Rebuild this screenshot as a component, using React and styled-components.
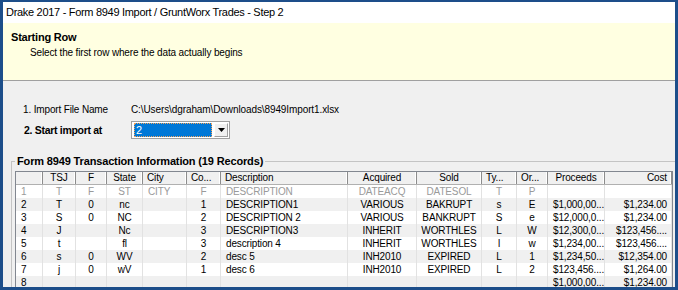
import styled, { createGlobalStyle } from "styled-components";

const GlobalStyle = createGlobalStyle`
  html, body {
    margin: 0;
    padding: 0;
    background: #ffffff;
  }
  body {
    font-family: "Liberation Sans", Arial, sans-serif;
    color: #000;
  }
`;

const COLUMNS = [
  { label: "", width: 27, align: "left" },
  { label: "TSJ", width: 33, align: "center" },
  { label: "F", width: 31, align: "center" },
  { label: "State", width: 36, align: "center" },
  { label: "City", width: 44, align: "left" },
  { label: "Co...", width: 34, align: "center", head: "left" },
  { label: "Description", width: 127, align: "left" },
  { label: "Acquired", width: 69, align: "center" },
  { label: "Sold", width: 65, align: "center" },
  { label: "Ty...", width: 35, align: "center", head: "left" },
  { label: "Or...", width: 31, align: "center", head: "left" },
  { label: "Proceeds", width: 57, align: "left", head: "center" },
  { label: "Cost", width: 67, align: "right" },
];

const ROWS = [
  ["1", "T", "F", "ST", "CITY", "F", "DESCRIPTION", "DATEACQ", "DATESOL", "T", "P", "", ""],
  ["2", "T", "0", "nc", "", "1", "DESCRIPTION1", "VARIOUS", "BAKRUPT", "s", "E", "$1,000,00...", "$1,234.00"],
  ["3", "S", "0", "NC", "", "2", "DESCRIPTION 2", "VARIOUS", "BANKRUPT", "S", "e", "$12,000,0...", "$1,234.00"],
  ["4", "J", "", "Nc", "", "3", "DESCRIPTION3", "INHERIT", "WORTHLES", "L", "W", "$12,300,0...", "$123,456...."],
  ["5", "t", "", "fl", "", "3", "description 4", "INHERIT", "WORTHLES", "l", "w", "$1,234,00...", "$123,456...."],
  ["6", "s", "0", "WV", "", "2", "desc 5", "INH2010", "EXPIRED", "L", "1", "$1,234,50...", "$12,354.00"],
  ["7", "j", "0", "wV", "", "1", "desc 6", "INH2010", "EXPIRED", "L", "2", "$123,456....", "$1,264.00"],
  ["8", "", "", "", "", "", "", "", "", "", "", "$1,000,00...", "$1,234.00"],
];

const TEMPLATE = COLUMNS.map((c) => `${c.width}px`).join(" ");

export default function App() {
  return (
    <>
      <GlobalStyle />
      <Window>
        <TitleBar>Drake 2017 - Form 8949 Import / GruntWorx Trades - Step 2</TitleBar>
        <Banner>
          <BannerTitle>Starting Row</BannerTitle>
          <BannerText>Select the first row where the data actually begins</BannerText>
        </Banner>
        <Content>
          <Fields>
            <FieldLabel>1. Import File Name</FieldLabel>
            <FieldValue>C:\Users\dgraham\Downloads\8949Import1.xlsx</FieldValue>
            <FieldLabel $bold>2. Start import at</FieldLabel>
            <Combo>
              <ComboValue>2</ComboValue>
              <ComboButton>
                <svg width="7" height="4" viewBox="0 0 7 4">
                  <path d="M0 0h7L3.5 4z" fill="#000" />
                </svg>
              </ComboButton>
            </Combo>
          </Fields>
          <Group>
            <Legend>Form 8949 Transaction Information (19 Records)</Legend>
            <ListView>
              <HeaderRow>
                {COLUMNS.map((c, i) => (
                  <HeaderCell key={i} $align={c.head || c.align}>
                    {c.label}
                  </HeaderCell>
                ))}
              </HeaderRow>
              {ROWS.map((row, r) => (
                <DataRow key={r} $shaded={r % 2 === 1} $dim={r === 0}>
                  {row.map((v, i) => (
                    <Cell key={i} $align={COLUMNS[i].align}>
                      {v}
                    </Cell>
                  ))}
                </DataRow>
              ))}
            </ListView>
          </Group>
        </Content>
      </Window>
    </>
  );
}

const Window = styled.div`
  width: 678px;
  height: 290px;
  box-sizing: border-box;
  border: 3px solid #1d4e8a;
  border-top-width: 2px;
  background: #f0f0f0;
  display: flex;
  flex-direction: column;
  overflow: hidden;
`;

const TitleBar = styled.div`
  height: 21px;
  line-height: 21px;
  padding-left: 3px;
  background: #ffffff;
  font-size: 11px;
  letter-spacing: -0.3px;
  white-space: nowrap;
`;

const Banner = styled.div`
  height: 58px;
  box-sizing: border-box;
  padding: 8px 0 0 8px;
  background: #ffffe1;
  border-bottom: 1px solid #a0a0a0;
  flex-shrink: 0;
`;

const BannerTitle = styled.div`
  font-size: 11px;
  font-weight: bold;
  line-height: 13px;
  letter-spacing: -0.2px;
`;

const BannerText = styled.div`
  margin: 2px 0 0 19px;
  font-size: 10px;
  line-height: 13px;
  letter-spacing: -0.15px;
`;

const Content = styled.div`
  flex: 1;
  min-height: 0;
  padding: 0 0 0 8px;
  display: flex;
  flex-direction: column;
  overflow: hidden;
`;

const Fields = styled.div`
  display: grid;
  grid-template-columns: 108px auto;
  grid-auto-rows: 18px;
  row-gap: 3px;
  align-items: center;
  justify-items: start;
  padding: 19px 0 0 12px;
`;

const FieldLabel = styled.div`
  font-size: ${(p) => (p.$bold ? "10.5px" : "10px")};
  font-weight: ${(p) => (p.$bold ? "bold" : "normal")};
  letter-spacing: ${(p) => (p.$bold ? "-0.3px" : "-0.15px")};
  padding-left: ${(p) => (p.$bold ? "1px" : "0")};
`;

const FieldValue = styled.div`
  font-size: 10px;
  letter-spacing: -0.1px;
  white-space: nowrap;
`;

const Combo = styled.div`
  display: flex;
  width: 99px;
  height: 18px;
  box-sizing: border-box;
  border: 1px solid #a0a0a0;
  background: #ffffff;
  padding: 1px 1px 1px 2px;
  gap: 2px;
`;

const ComboValue = styled.div`
  flex: 1;
  background: #0078d7;
  color: #ffffff;
  font-size: 11px;
  line-height: 14px;
  padding-left: 2px;
  outline: 1px dotted #f3a25a;
  outline-offset: -1px;
`;

const ComboButton = styled.div`
  width: 14px;
  box-sizing: border-box;
  background: #f0f0f0;
  border: 1px solid;
  border-color: #ffffff #a0a0a0 #a0a0a0 #ffffff;
  display: flex;
  align-items: center;
  justify-content: center;
`;

const Group = styled.fieldset`
  margin: 16px -40px 0 0;
  padding: 3px 0 0 3px;
  border: 1px solid #c4c4c4;
  min-width: 0;
  flex: 1;
`;

const Legend = styled.legend`
  padding: 0 2px;
  font-size: 11px;
  font-weight: bold;
  line-height: 13px;
  letter-spacing: -0.15px;
`;

const ListView = styled.div`
  width: 656px;
  border: 1px solid #828790;
  background: #ffffff;
  font-size: 10px;
  letter-spacing: -0.15px;
`;

const HeaderRow = styled.div`
  display: grid;
  grid-template-columns: ${TEMPLATE};
  height: 13px;
  box-sizing: border-box;
  background: #f0f0f0;
  border-bottom: 1px solid #b0b0b0;
`;

const HeaderCell = styled.div`
  text-align: ${(p) => p.$align};
  padding: 0 4px;
  line-height: 12px;
  border-right: 1px solid #8c8c8c;
  box-shadow: inset -1px 0 0 #ffffff;
  white-space: nowrap;
  overflow: hidden;
`;

const DataRow = styled.div`
  display: grid;
  grid-template-columns: ${TEMPLATE};
  height: 13px;
  background: ${(p) => (p.$shaded ? "#f0f0f0" : "#ffffff")};
  color: ${(p) => (p.$dim ? "#9a9a9a" : "#000000")};
`;

const Cell = styled.div`
  text-align: ${(p) => p.$align};
  padding: ${(p) => (p.$align === "right" ? "0 4px 0 2px" : p.$align === "left" ? "0 2px 0 5px" : "0 2px")};
  line-height: 13px;
  border-right: 1px solid #e2e2e2;
  white-space: nowrap;
  overflow: hidden;
`;
